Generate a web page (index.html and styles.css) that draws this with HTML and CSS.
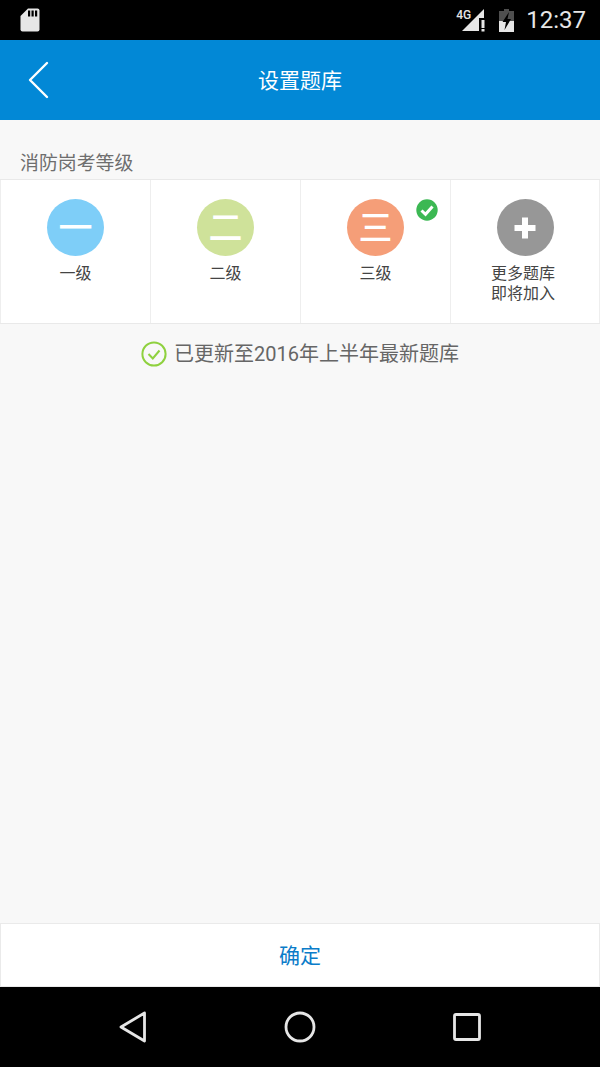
FILE: index.html
```html
<!DOCTYPE html>
<html lang="zh-CN">
<head>
  <meta charset="UTF-8">
  <title>设置题库</title>
  <meta name="viewport" content="width=device-width, initial-scale=1.0">
  <link rel="stylesheet" href="styles.css">
</head>
<body>

<div class="status-bar">
  <svg class="sd-icon" width="20" height="24" viewBox="0 0 20 24">
    <path d="M8 0.5H17.500Q19.500 0.500 19.500 2.500V21.500Q19.500 23.500 17.500 23.500H2.500Q0.500 23.500 0.500 21.500V8Z" fill="#e6e6e6"/>
    <path d="M8 2.500h2.200v6H8zM11.500 2.500h2.200v6h-2.200zM15 2.500h2.200v6H15z" fill="#000"/>
  </svg>
  <div class="status-right">
    <div class="signal">
      <span class="net">4G</span>
      <svg width="26" height="24" viewBox="0 0 26 24">
        <path d="M0 23L22 1V10H17V23Z" fill="#e6e6e6"/>
        <path d="M19.500 12h3v8h-3zM19.500 21h3v2.500h-3z" fill="#e6e6e6"/>
      </svg>
    </div>
    <svg class="battery" width="16" height="24" viewBox="0 0 16 24">
      <path d="M5 1h5v2h5v21H0V3h5z" fill="#4f4f4f"/>
      <path d="M0 13H15V24H0Z" fill="#e6e6e6"/>
      <path d="M10 4L3.500 14H7L5.500 22L12 11H8.500Z" fill="#000"/>
    </svg>
    <span class="clock">12:37</span>
  </div>
</div>

<header class="title-bar">
  <svg class="back" width="24" height="40" viewBox="0 0 24 40">
    <path d="M21 3L4 20L21 37" fill="none" stroke="#fff" stroke-width="2.400" stroke-linecap="round" stroke-linejoin="round"/>
  </svg>
  <h1>设置题库</h1>
</header>

<main class="content">
  <h2 class="section-label">消防岗考等级</h2>
  <div class="levels">
    <div class="level">
      <div class="badge blue">一</div>
      <p>一级</p>
    </div>
    <div class="level">
      <div class="badge green">二</div>
      <p>二级</p>
    </div>
    <div class="level">
      <div class="badge orange">三</div>
      <svg class="selected" width="22" height="22" viewBox="0 0 22 22">
        <circle cx="11" cy="11" r="10.700" fill="#3cb853"/>
        <path d="M5.500 11.500L9.500 15.300L16.500 7.500" fill="none" stroke="#fff" stroke-width="3"/>
      </svg>
      <p>三级</p>
    </div>
    <div class="level">
      <div class="badge grey">
        <svg width="22" height="22" viewBox="0 0 22 22">
          <path d="M8 0.500h6V8h7.500v6H14v7.500H8V14H0.500V8H8Z" fill="#fff"/>
        </svg>
      </div>
      <p>更多题库<br>即将加入</p>
    </div>
  </div>
  <div class="update-note">
    <svg width="26" height="26" viewBox="0 0 26 26">
      <circle cx="13" cy="13" r="11.600" fill="none" stroke="#8fd13f" stroke-width="2"/>
      <path d="M7.500 13L11.800 17.500L18.500 9.500" fill="none" stroke="#8fd13f" stroke-width="2"/>
    </svg>
    <span>已更新至2016年上半年最新题库</span>
  </div>
</main>

<div class="footer">确定</div>

<nav class="nav-bar">
  <svg width="28" height="32" viewBox="0 0 28 32">
    <path d="M25.500 2L2 16L25.500 30Z" fill="none" stroke="#e6e6e6" stroke-width="2.800" stroke-linejoin="round"/>
  </svg>
  <svg width="32" height="32" viewBox="0 0 32 32">
    <circle cx="16" cy="16" r="14" fill="none" stroke="#e6e6e6" stroke-width="2.800"/>
  </svg>
  <svg width="28" height="28" viewBox="0 0 28 28">
    <rect x="1.500" y="1.500" width="25" height="25" rx="1.500" fill="none" stroke="#e6e6e6" stroke-width="2.800"/>
  </svg>
</nav>

</body>
</html>
```

FILE: styles.css
```css
* {
  box-sizing: border-box;
}

body {
  margin: 0;
  height: 1067px;
  display: flex;
  flex-direction: column;
  font-family: Roboto, "Noto Sans CJK SC", sans-serif;
  background-color: #f8f8f8;
  overflow: hidden;
}

.status-bar {
  height: 40px;
  background-color: #000;
  display: flex;
  justify-content: space-between;
  align-items: center;
  padding: 0 14px 0 20px;
  color: #e6e6e6;
}

.status-right {
  display: flex;
  align-items: center;
}

.signal {
  position: relative;
  width: 26px;
  height: 24px;
}

.signal svg {
  display: block;
  margin-left: -1px;
}

.net {
  position: absolute;
  left: -7px;
  top: 1px;
  font-size: 12px;
  font-weight: 500;
  line-height: 12px;
}

.battery {
  margin-left: 10px;
}

.clock {
  margin-left: 11px;
  font-size: 24px;
}

.title-bar {
  position: relative;
  height: 80px;
  padding-bottom: 2px;
  background-color: #0288d6;
  display: flex;
  justify-content: center;
  align-items: center;
}

.title-bar h1 {
  margin: 0;
  font-size: 21px;
  font-weight: 400;
  color: #fff;
}

.back {
  position: absolute;
  left: 26px;
  top: 20px;
}

.content {
  flex: 1;
  padding-top: 30px;
}

.section-label {
  margin: 0 0 2px 20px;
  font-size: 18.900px;
  line-height: 27px;
  font-weight: 400;
  color: #6e6e6e;
}

.levels {
  display: grid;
  grid-template-columns: repeat(4, 150px);
  height: 145px;
  background-color: #fff;
  border-top: 1px solid #e9e9e9;
  border-bottom: 1px solid #e9e9e9;
}

.level {
  position: relative;
  padding-top: 19px;
  border-left: 1px solid #eee;
  text-align: center;
}

.level:last-child {
  border-right: 1px solid #eee;
}

.level p {
  margin: 8px 0 0;
  font-size: 16px;
  line-height: 20px;
  color: #444;
}

.level:last-child p {
  padding-right: 4px;
}

.badge {
  width: 57px;
  height: 57px;
  margin: 0 auto;
  border-radius: 50%;
  display: flex;
  justify-content: center;
  align-items: center;
  font-size: 34px;
  font-weight: 500;
  line-height: 1;
  color: #fff;
}

.blue { background-color: #7ecef8; }
.green { background-color: #cfe29a; }
.orange { background-color: #f59e78; }
.grey { background-color: #979797; }

.selected {
  position: absolute;
  left: 115px;
  top: 19px;
}

.update-note {
  display: flex;
  justify-content: center;
  align-items: center;
  gap: 7px;
  margin-top: 17px;
  font-size: 20px;
  line-height: 26px;
  color: #666;
}

.footer {
  height: 64px;
  padding-bottom: 2px;
  display: flex;
  justify-content: center;
  align-items: center;
  background-color: #fff;
  border: 1px solid #eaeaea;
  font-size: 21px;
  color: #0a7cc9;
}

.nav-bar {
  height: 80px;
  background-color: #000;
  display: flex;
  justify-content: space-between;
  align-items: center;
  padding: 0 119px;
}
```
